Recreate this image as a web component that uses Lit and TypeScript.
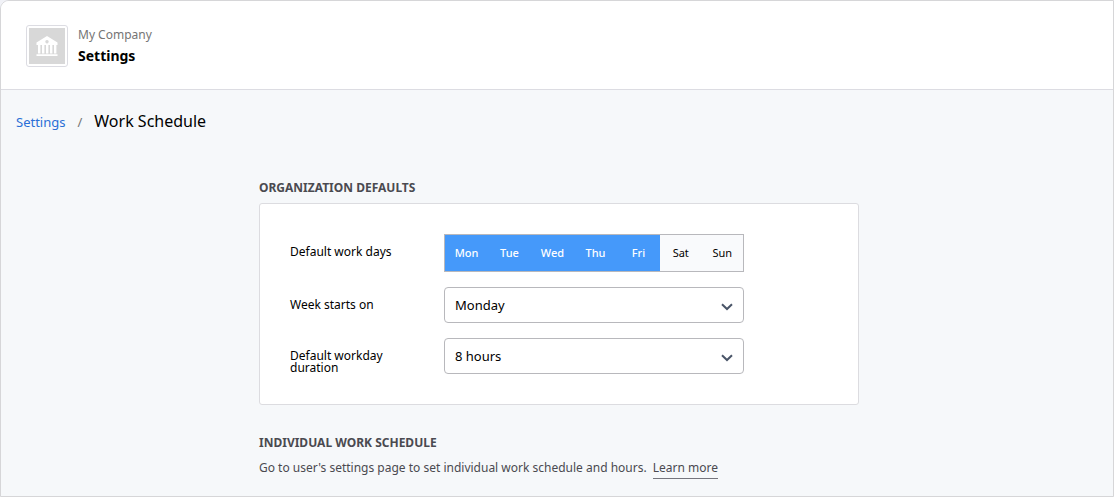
import { LitElement, html, css, svg } from "lit";
import { customElement, state } from "lit/decorators.js";

const DAYS = ["Monday", "Tuesday", "Wednesday", "Thursday", "Friday", "Saturday", "Sunday"];

const chevron = svg`<svg class="chevron" viewBox="0 0 12 8" width="12" height="8" aria-hidden="true">
  <path d="M1 1.2 L6 6 L11 1.2" fill="none" stroke="#4a5568" stroke-width="2" />
</svg>`;

@customElement("app-root")
export class AppRoot extends LitElement {
  @state() private workDays = new Set(["Monday", "Tuesday", "Wednesday", "Thursday", "Friday"]);

  static styles = css`
    :host {
      display: block;
      background: #f1f2f7;
      color: #000;
      font-family: "Noto Sans", sans-serif;
      font-size: 12px;
    }
    *, *::before, *::after { box-sizing: border-box; }
    h1, h2, p { margin: 0; }
    .page {
      min-height: 100vh;
      border: 1px solid #d6d6d8;
      border-top-left-radius: 9px;
      background: #f6f8fa;
    }
    .header {
      display: flex;
      align-items: center;
      gap: 10px;
      padding: 24px 25px 22px;
      background: #fff;
      border-bottom: 1px solid #dcdce2;
      border-top-left-radius: 8px;
    }
    .logo {
      display: flex;
      width: 42px;
      height: 42px;
      padding: 2px;
      border: 1px solid #dcdce2;
      border-radius: 3px;
      background: #fff;
    }
    .logo svg { display: block; width: 36px; height: 36px; background: #d8d8d8; }
    .company { font-size: 12px; line-height: 20px; color: #757575; }
    .title { font-size: 14px; line-height: 22px; font-weight: 700; }
    .crumbs {
      display: flex;
      align-items: baseline;
      gap: 12px;
      padding: 19px 15px 0;
      font-size: 13px;
      line-height: 24px;
      color: #757575;
    }
    .crumbs a { color: #2a6fd6; text-decoration: none; }
    .crumbs h1 { font-size: 16px; font-weight: 400; color: #000; }
    .content { padding: 45px 11px 8px 15px; }
    .column { max-width: 600px; margin: 0 auto; color: #4a4a50; }
    h2 { font-size: 12px; line-height: 18px; font-weight: 700; text-transform: uppercase; }
    .card {
      display: grid;
      gap: 15px;
      margin: 6px 0 29px;
      padding: 30px;
      background: #fff;
      border: 1px solid #dcdce0;
      border-radius: 3px;
      color: #000;
    }
    .row {
      display: grid;
      grid-template-columns: 124px minmax(0, 300px);
      gap: 30px;
    }
    .name { padding-top: 12px; line-height: 12px; }
    .days {
      display: flex;
      height: 38px;
      border: 1px solid #b8b8bc;
      background: #f9fafc;
      font-size: 11px;
    }
    .day { display: flex; flex: 1; cursor: pointer; }
    .day input { appearance: none; width: 0; height: 0; margin: 0; }
    .day span { flex: 1; line-height: 36px; text-align: center; }
    .day.on { flex: 0 1 43px; background: #4599fa; color: #fff; font-weight: 500; }
    .select { display: flex; align-items: center; position: relative; }
    select {
      appearance: none;
      width: 100%;
      height: 36px;
      padding: 0 30px 0 10px;
      border: 1px solid #b8b8bc;
      border-radius: 4px;
      background: #fff;
      color: #000;
      font: 13px "Noto Sans", sans-serif;
    }
    .chevron { position: absolute; right: 11px; top: 16px; pointer-events: none; }
    .note { margin-top: 6px; line-height: 20px; }
    .note a {
      display: inline-block;
      margin-left: 3px;
      border-bottom: 1px solid #75757d;
      color: inherit;
      text-decoration: none;
    }
  `;

  private toggle(day: string) {
    const next = new Set(this.workDays);
    if (!next.delete(day)) next.add(day);
    this.workDays = next;
  }

  render() {
    return html`
      <div class="page">
        <header class="header">
          <div class="logo">
            <svg viewBox="0 0 36 36" fill="#fff" aria-hidden="true">
              <path fill-rule="evenodd" d="M18 8 L28.5 14.5 V17 H7.5 V14.5 Z M18 12 a1.7 1.7 0 1 0 .01 0 Z" />
              <path d="M9 17h2.4v8.500h-2.400z M13 17h2.400v8.500h-2.400z M17 17h2.400v8.500h-2.400z M21 17h2.400v8.500h-2.400z M25 17h2.400v8.500h-2.400z M7.500 26.200h21v1.800h-21z" />
            </svg>
          </div>
          <div>
            <div class="company">My Company</div>
            <div class="title">Settings</div>
          </div>
        </header>
        <nav class="crumbs" aria-label="Breadcrumb">
          <a href="#settings">Settings</a><span>/</span>
          <h1>Work Schedule</h1>
        </nav>
        <main class="content">
          <div class="column">
            <h2>Organization defaults</h2>
            <section class="card">
              <div class="row" role="group" aria-labelledby="days-name">
                <div class="name" id="days-name">Default work days</div>
                <div class="days">
                  ${DAYS.map((day) => html`
                    <label class="day ${this.workDays.has(day) ? "on" : ""}">
                      <input type="checkbox" .checked=${this.workDays.has(day)} @change=${() => this.toggle(day)} />
                      <span>${day.slice(0, 3)}</span>
                    </label>`)}
                </div>
              </div>
              <div class="row">
                <label class="name" for="week-start">Week starts on</label>
                <div class="select">
                  <select id="week-start">${DAYS.map((day) => html`<option>${day}</option>`)}</select>
                  ${chevron}
                </div>
              </div>
              <div class="row">
                <label class="name" for="duration">Default workday duration</label>
                <div class="select">
                  <select id="duration"><option>8 hours</option></select>
                  ${chevron}
                </div>
              </div>
            </section>
            <h2>Individual work schedule</h2>
            <p class="note">
              Go to user's settings page to set individual work schedule and hours.
              <a href="#learn-more">Learn more</a>
            </p>
          </div>
        </main>
      </div>
    `;
  }
}
